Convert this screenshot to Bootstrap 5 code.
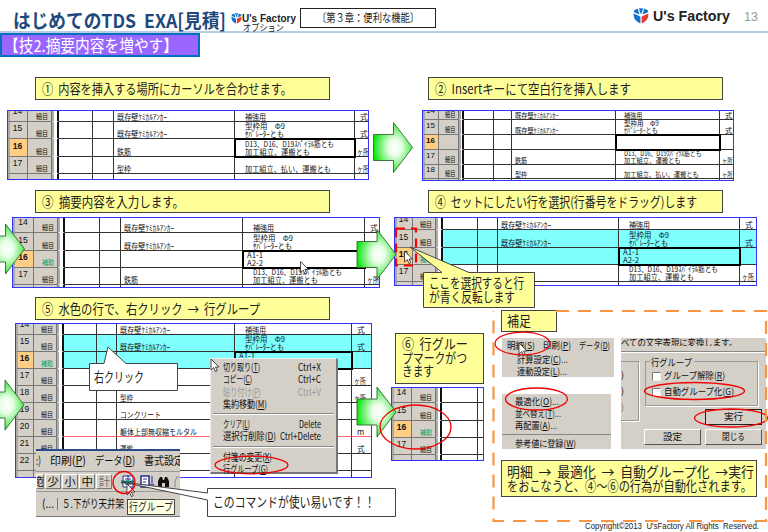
<!DOCTYPE html>
<html lang="ja">
<head>
<meta charset="utf-8">
<meta name="viewport" content="width=device-width, initial-scale=1">
<title>はじめてのTDS EXA[見積]</title>
<link href="https://cdn.jsdelivr.net/npm/bootstrap@5.3.0/dist/css/bootstrap.min.css" rel="stylesheet">
<style>
body{width:768px;height:532px;overflow:hidden;background:#fff;color:#222;font-family:"Liberation Sans","Noto Sans CJK JP",sans-serif;font-size:14px;line-height:1}
.jp{font-family:"Noto Sans CJK JP",sans-serif}
[data-w]{display:inline-block;white-space:pre;transform-origin:0 50%}
.top{height:33px;border-bottom:2px solid #b8cce4}
.top>*{flex-shrink:0}
.ttl{width:231px;padding:10px 0 0 13px;font-size:19px;font-weight:700;color:#1f497d;white-space:nowrap}
.brand-sm{width:69px;margin-top:13px;font-size:10.5px;font-weight:bold;white-space:nowrap}
.brand-sm .opt{font-size:9px;font-weight:400;padding-left:12px;line-height:8px}
.chap{width:136px;height:20px;margin:8px 0 0 0;border:1px solid #222;font-size:11.5px}
.brand-lg{margin:8px 0 0 197px;font-size:14.5px;font-weight:bold;height:16px}
.pg{margin:11px 0 0 14px;font-size:12.5px;color:#999}
.tech{width:200px;height:24px;background:#96f;border:2px solid #0070c0;color:#fff;font-size:16.5px;padding-left:2px}
.band-a{height:130px}.band-b{height:105px}.band-c{height:240px}
.note{background:#ff9;border:1px solid #444;font-size:13.5px;height:23px;width:295px;padding-left:6px;white-space:nowrap}
.s1{width:400px;padding-top:20px}.s1 .note{margin-left:35px}.s1 .fig{margin:10px 0 0 7px}
.s2{padding-top:20px}.s2 .note{margin-left:28px}.s2 .fig{margin:10px 0 0 22px}
.s3{width:390px;padding-top:3px}.s3 .note{margin-left:35px}.s3 .fig{margin:4px 0 0 12px}
.s4{padding-top:3px}.s4 .note{margin-left:38px}.s4 .fig{margin:4px 0 0 4px}
.s5{width:380px;padding-top:5px}.s5 .note{margin-left:35px}.s5 .fig{margin:3px 0 0 15px}
.s6{width:113px;padding-top:41px}.s6 .note{margin-left:15px;width:89px;height:51px;line-height:13.6px;padding-top:3px}.s6 .fig{margin:3px 0 0 11px}
.s6 .note span{line-height:13.6px}
.fig{border:1px solid #33f;overflow:hidden;isolation:isolate;background:#fff;font-family:"Noto Sans CJK JP",sans-serif}
.sheet{display:grid}
.sheet>div{position:relative;border-right:1px solid #333;border-bottom:1px solid #333;display:flex;flex-direction:column;justify-content:flex-end;font-size:7.8px;line-height:7.8px;color:#111;white-space:nowrap;min-width:0;min-height:0}
.sheet.tight>div{line-height:6.9px;font-size:7.2px}
.sheet>.num{background:#d4d0c8;border-color:#777;font-size:8.5px;font-family:"Liberation Sans",sans-serif;padding:0 2px 5px 0;text-align:center;border-left:2px solid #aaa}
.sheet.tight>.num{padding-bottom:4px;font-size:8px}
.sheet>.num.on{background:#ffce84;font-weight:bold}
.sheet>.kind{background:#d4d0c8;border-color:#777;align-items:center;font-size:7px;line-height:7px;padding-left:4px;padding-bottom:1px}
.sheet>.kind.aid{color:#00a060}
.sheet>.gap{border-bottom-color:#fff;border-right:2px solid #111;background:#fff;border-left:2px solid #aaa}
.sheet>.aqua{background:#80ffff}
.sheet>.cur{outline:2px solid #000;outline-offset:-1px;z-index:1}
.sheet>.redl{border-bottom-color:#f66}
.sheet>.last{border-right:0}
.sup{width:273px;height:211px;margin-top:18px}
.sup .lbl{width:56px;height:22px;margin-left:8px;padding-left:5px}
.win{background:#d4d0c8;font-family:"Noto Sans CJK JP",sans-serif;font-size:9.5px;white-space:nowrap;overflow:hidden;color:#111}
.m1{width:112px;height:39px;margin:6px 0 0 9px}.m1 .bar{height:15px;padding-left:5px;gap:8px}
.m1 .it,.m2 .it{height:12px;line-height:12px;padding-left:15px}
.m2{width:109px;height:55px;margin:17px 0 0 9px;padding-top:1px}.m2 .it{padding-left:13px}
.m2 .sep{border-top:1px solid #888;margin:3px 0 2px}
.dlg{width:145px;height:111px;margin-top:6px;margin-left:7px}
.dlg .cut{height:14px;border-bottom:1px solid #888;box-shadow:0 1px #fff}
.dlg .cut>div{height:8px;width:130px;overflow:hidden}
.dlg .cut span{margin-top:-4px}
.grpL{width:18px;height:60px;margin-top:9px;border:1px solid #999;border-left:0;box-shadow:1px 1px #fff;padding-top:5px;line-height:16px;font-size:9px}
.grpR{width:113px;height:45px;margin:9px 0 0 6px;border:1px solid #999;box-shadow:1px 1px #fff}
.grpR .leg{margin:-6px 0 0 4px;height:12px;line-height:12px;background:#d4d0c8;width:44px;padding-left:1px}
.chk{width:9px;height:9px;background:#fff;border:1px solid #777;border-right-color:#eee;border-bottom-color:#eee;margin-right:3px}
.grpR .ln{height:16px;padding-left:6px}
.wb{background:#d4d0c8;border:1px solid #fff;border-right-color:#555;border-bottom-color:#555;height:16px;width:57px}
.wb.dk{border-color:#222}.runrow{margin-top:-12px}
.sup .msg{width:256px;height:37px;margin:11px 0 0 8px;line-height:14px;padding:3px 0 0 5px}
.copy{font:8.6px/1 "Liberation Sans",sans-serif;padding:1px 0 0 92px;white-space:nowrap}
.over{position:absolute}
.ctx{left:210px;top:358px;width:128px;height:116px;background:#d4d0c8;border:1px solid #eee;border-right:2px solid #777;border-bottom:2px solid #777;padding:2px 15px 0 12px;font-size:9.8px;color:#111}
.ctx .it{height:12.3px;line-height:12.3px;white-space:nowrap}
.ctx .dim{color:#999}
.ctx hr{margin:3px -13px 3px -10px;border:0;border-top:1px solid #888;border-bottom:1px solid #fff;opacity:1}
.tb{left:36px;top:449px;width:144px;height:68px;border-top:2px solid #2c4b87;font-size:11.5px;border-bottom:1px solid #777}
.tb .r1{height:21px;gap:9px;border-bottom:1px solid #999}
.tb .r2{height:20px;gap:1px;border-bottom:1px solid #999}
.tb .bt{width:16.5px;height:15px;border:1px solid #fff;border-right-color:#777;border-bottom-color:#777;font-size:11.5px;line-height:12px;text-align:center}
.tb .bt.half{width:8px;text-indent:-5px;overflow:hidden}
.tb .r3{height:24px;padding-left:6px}
.tb .tab1{border-left:1px solid #777;margin-left:3px;padding-left:4px}
.tip{left:127px;top:499px;width:48px;height:16px;background:#ffffe1;border:1px solid #444;font-size:11px;line-height:13px;padding-left:1px}
.draw{left:0;top:0;pointer-events:none}
.t1{left:429px;top:275px;line-height:14px;font-size:13.5px}
.t2{left:94px;top:370px;font-size:13.5px}
.t3{left:213px;top:495px;font-size:13.5px}
</style>
<script src="https://cdn.jsdelivr.net/npm/bootstrap@5.3.0/dist/js/bootstrap.bundle.min.js"></script>
</head>
<body class="position-relative">
<svg width="0" height="0" class="over"><defs>
<symbol id="logo" viewBox="0 0 16 16"><path d="M.6 5.6 7.4 8.400V15.500Q1 13 .6 7Z" fill="#1473c8"/><path d="M8.600 15.500V8.400L15.400 5.600V7Q15 13 8.600 15.500Z" fill="#e8382f"/><path d="M1 4.200 1.200 2.200 4.600.6 6.600 6.500Z" fill="#1473c8"/><path d="M5.800.4Q8 0 10.200.4L8 6.400Z" fill="#1473c8"/><path d="M11.400.6 14.800 2.200 15 4.200 9.400 6.500Z" fill="#1473c8"/></symbol>
</defs></svg>

<header class="top d-flex align-items-start">
  <div class="ttl jp"><span data-w="213">はじめてのTDS  EXA[見積]</span></div>
  <div class="brand-sm"><div class="d-flex"><svg width="11" height="11" class="me-px"><use href="#logo"/></svg><span data-w="54">U's Factory</span></div><div class="opt jp"><span data-w="41">オプション</span></div></div>
  <div class="chap jp d-flex align-items-center justify-content-center"><span data-w="102">〔第３章：便利な機能〕</span></div>
  <div class="brand-lg d-flex align-items-center"><svg width="16" height="16" class="me-1"><use href="#logo"/></svg><span data-w="77">U's Factory</span></div>
  <div class="pg">13</div>
</header>
<div class="tech jp d-flex align-items-center"><span data-w="174">【技2.摘要内容を増やす】</span></div>

<main class="jp">
  <div class="band-a d-flex">
    <section class="s1"><div class="note d-flex align-items-center"><span data-w="250">①  内容を挿入する場所にカーソルを合わせます。</span></div><div class="fig" data-sheet="a"></div></section>
    <section class="s2"><div class="note d-flex align-items-center"><span data-w="196">②  Insertキーにて空白行を挿入します</span></div><div class="fig" data-sheet="b"></div></section>
  </div>
  <div class="band-b d-flex">
    <section class="s3"><div class="note d-flex align-items-center"><span data-w="142">③  摘要内容を入力します。</span></div><div class="fig" data-sheet="c"></div></section>
    <section class="s4"><div class="note d-flex align-items-center"><span data-w="262">④  セットにしたい行を選択(行番号をドラッグ)します</span></div><div class="fig" data-sheet="d"></div></section>
  </div>
  <div class="band-c d-flex">
    <section class="s5"><div class="note d-flex align-items-center"><span data-w="218">⑤  水色の行で、右クリック  →  行グループ</span></div><div class="fig" data-sheet="e"></div></section>
    <section class="s6"><div class="note"><span data-w="66">⑥  行グルー</span><br><span data-w="65">プマークがつ</span><br><span data-w="32">きます</span></div><div class="fig" data-sheet="f"></div></section>
    <section>
      <div class="sup">
        <div class="note lbl d-flex align-items-center"><span data-w="24">補足</span></div>
        <div class="d-flex">
          <div>
            <div class="win m1"><div class="bar d-flex align-items-center"><span data-w="28">明細(<u>S</u>)</span><span data-w="28">印刷(<u>P</u>)</span><span data-w="31">データ(<u>D</u>)</span></div><div class="it"><span data-w="51">計算設定(<u>C</u>)...</span></div><div class="it"><span data-w="50">連動設定(<u>L</u>)...</span></div></div>
            <div class="win m2"><div class="it"><span data-w="44">最適化(<u>O</u>)...</span></div><div class="it"><span data-w="46">並べ替え(<u>T</u>)...</span></div><div class="it"><span data-w="42">再配置(<u>A</u>)...</span></div><div class="sep"></div><div class="it"><span data-w="61">参考値に登録(<u>W</u>)</span></div></div>
          </div>
          <div class="win dlg">
            <div class="cut"><div><span data-w="116">べての文字表現に変換します。</span></div></div>
            <div class="d-flex"><div class="grpL">)<br>)<br><span class="text-black-50">)</span></div>
              <div class="grpR"><div class="leg"><span data-w="41">行グループ</span></div><div class="ln d-flex align-items-center"><i class="chk"></i><span data-w="61">グループ解除(<u>R</u>)</span></div><div class="ln d-flex align-items-center"><i class="chk"></i><span data-w="70">自動グループ化(<u>G</u>)</span></div></div>
            </div>
            <div class="runrow d-flex justify-content-end pe-1"><div class="wb dk d-flex align-items-center justify-content-center">実行</div></div>
            <div class="d-flex justify-content-end pe-1 gap-1 pt-1"><div class="wb d-flex align-items-center justify-content-center">設定</div><div class="wb d-flex align-items-center justify-content-center"><span data-w="23">閉じる</span></div></div>
          </div>
        </div>
        <div class="note msg"><span data-w="247">明細  →  最適化  →  自動グループ化  →実行</span><br><span data-w="245">をおこなうと、④～⑥の行為が自動化されます。</span></div>
      </div>
      <footer class="copy"><span data-w="174">Copyright©2013  U'sFactory All Rights  Reserved.</span></footer>
    </section>
  </div>
</main>

<div class="over ctx jp">
  <div class="it d-flex justify-content-between"><span data-w="37">切り取り(<u>T</u>)</span><span data-w="23">Ctrl+X</span></div>
  <div class="it d-flex justify-content-between"><span data-w="29">コピー(<u>C</u>)</span><span data-w="23">Ctrl+C</span></div>
  <div class="it dim d-flex justify-content-between"><span data-w="38">貼り付け(<u>P</u>)</span><span data-w="23">Ctrl+V</span></div>
  <div class="it"><span data-w="44">集約移動(<u>M</u>)</span></div>
  <hr>
  <div class="it d-flex justify-content-between"><span data-w="27">クリア(<u>L</u>)</span><span data-w="22">Delete</span></div>
  <div class="it d-flex justify-content-between"><span data-w="53">選択行削除(<u>D</u>)</span><span data-w="41">Ctrl+Delete</span></div>
  <hr>
  <div class="it"><span data-w="49">付箋の変更(<u>X</u>)</span></div>
  <div class="it"><span data-w="45">行グループ(<u>G</u>)</span></div>
</div>

<div class="over win tb">
  <div class="r1 d-flex align-items-center"><span data-w="5">:)</span><span data-w="36">印刷(<u>P</u>)</span><span data-w="40">データ(<u>D</u>)</span><span data-w="40">書式設定</span></div>
  <div class="r2 d-flex align-items-center"><span class="bt half">範</span><span class="bt">少</span><span class="bt">小</span><span class="bt">中</span><span class="bt text-black-50">計</span>
    <svg width="64" height="18" class="ms-1"><path d="M6 3h10v11H6z" fill="#fff" stroke="#2a2a90"/><path d="M8 6h6M8 11h6M11 2v13" stroke="#2a2a90"/><path d="M4 9h13" stroke="#067a78" stroke-width="3"/><path d="M24 3h8v11h-8z" fill="#fff" stroke="#2a2a90" stroke-width="1.5"/><path d="M26 6h4M26 9h3M26 12h4M35 3v11M33 11l2 3 2-3" stroke="#2a2a90" fill="none"/><path d="M41 14V8l2-4h2l1 3h1l1-3h2l2 4v6h-4v-4h-3v4Z" fill="#111"/><path d="M58 14V8l2-4h2" stroke="#888" fill="none"/></svg></div>
  <div class="r3 d-flex align-items-center"><span data-w="12">(...</span><span class="tab1"><span data-w="62">５.下がり天井架</span></span></div>
</div>
<div class="over tip jp"><span data-w="44">行グループ</span></div>

<svg class="over draw" width="768" height="532">
  <defs>
    <radialGradient id="gr" cx=".55" cy=".5" r=".56"><stop offset="0" stop-color="#fff"/><stop offset=".3" stop-color="#e8fde8"/><stop offset="1" stop-color="#0ae60a"/></radialGradient>
    <path id="arw" d="M.5 12.5H20.5V.5L39.5 25.5 20.5 50.5V38.5H.5Z" fill="url(#gr)" stroke="#363" stroke-width=".9"/>
    <path id="ptr" d="M0 0V11L2.7 8.6 4.5 12.6 6.2 11.8 4.5 8H8Z" fill="#fff" stroke="#222" stroke-width=".8"/>
  </defs>
  <use href="#arw" x="373" y="122"/><use href="#arw" x="-15" y="223.500"/><use href="#arw" x="356.500" y="229"/><use href="#arw" x="-15.500" y="379.500"/><use href="#arw" x="356.500" y="386.500"/>
  <rect x="396" y="228.500" width="20" height="37" fill="none" stroke="#f00" stroke-width="2.200" stroke-dasharray="9 6"/>
  <use href="#ptr" x="404.500" y="251"/><use href="#ptr" x="300.500" y="261.500"/><use href="#ptr" x="211" y="359"/><use href="#ptr" x="519" y="343"/><use href="#ptr" x="127" y="484"/>
  <path d="M423.500 272.500H442L410 247 469 272.500H534.500V307.500H423.500Z" fill="#ff9" stroke="#444"/>
  <path d="M89.500 363.500H104L108 347 126 363.500H177.500V390.500H89.500Z" fill="#fff" stroke="#444"/>
  <path d="M207.500 488.500H395.500V516.500H207.500V500L122 482 207.500 493Z" fill="#fff" stroke="#444"/>
  <g fill="none" stroke="#f00000" stroke-width="1.300"><ellipse cx="251.500" cy="465" rx="36.500" ry="8.800"/><circle cx="124" cy="482.500" r="11"/><ellipse cx="415.500" cy="427" rx="35.500" ry="22"/><ellipse cx="522.500" cy="343.500" rx="27.500" ry="11.300"/><ellipse cx="536.500" cy="399" rx="31" ry="11"/><ellipse cx="694.500" cy="391" rx="50" ry="8.500"/><ellipse cx="731" cy="418" rx="36.500" ry="9"/></g>
  <path d="M556 311H766V521H493.500V311" fill="none" stroke="#f79646" stroke-width="2.200" stroke-dasharray="13 9"/>
</svg>
<div class="over t1 jp"><span data-w="95">ここを選択すると行</span><br><span data-w="86">が青く反転します</span></div>
<div class="over t2 jp"><span data-w="50">右クリック</span></div>
<div class="over t3 jp"><span data-w="162">このコマンドが使い易いです！！</span></div>

<script>
// Cell text is written as "text|width"; several lines are separated by "/".
const ANC = '既存壁ｹﾐｶﾙｱﾝｶｰ|50', SEP = '型枠用　Φ9|40/ｾﾊﾟﾚｰﾀｰとも|39',
      BAR = 'D13、D16、D19ｽﾊﾟｲﾗﾙ筋とも|89/加工組立、運搬とも|65', CAR = '加工組立、払い、運搬とも|86';
const sheets = {
  a: {w:362,h:70,x:[20,24,7,34,21,121,120,14],y:[11,17,18,17,8],pad:10,
    rows:[['14','細目',ANC,'補強用|21','式'],['15','細目',ANC,SEP,'式'],['16','細目','鉄筋|14',BAR,'ヶ所','on cur'],['17','細目','型枠|14',CAR,'ヶ所'],['','','','','']]},
  b: {w:312,h:71,x:[16,20,5,30,18,104,104,14],y:[9,15,15,15,14,3],pad:8,k:.87,
    rows:[['14','細目',ANC,'補強用|21','式'],['15','細目',ANC,SEP,'式'],['16','','','','','on cur'],['17','細目','鉄筋|14',BAR,'ヶ所'],['18','細目','型枠|14',CAR,'ヶ所'],['','','','','']]},
  c: {w:368,h:71,x:[21,24,7,35,21,122,122,15],y:[15,18,17,17,4],pad:10,
    rows:[['14','細目',ANC,'補強用|21','式'],['15','細目',ANC,SEP,'式'],['16','補助','','A1-1|16/A2-2|16','','on cur in'],['17','細目','鉄筋|14',BAR,'ヶ所'],['','','','','']]},
  d: {w:363,h:69,x:[18,23,7,35,20,121,121,17],y:[12,18,17,17,4],pad:10,
    rows:[['14','細目',ANC,'補強用|21','式'],['15','細目',ANC,SEP,'式','aqua'],['16','補助','','A1-1|16/A2-2|16','','on cur in aqua'],['17','細目','',BAR,'ヶ所'],['','','','','']]},
  e: {w:357,h:155,x:[18,23,7,33,20,118,117,20],y:[11,17,17,17,17,17,17,17,17,7],pad:10,
    rows:[['14','細目',ANC,'補強用|21','式'],['15','細目',ANC,SEP,'式','aqua'],['16','補助','','A1-1|16/&nbsp;','','on cur in aqua'],['17','細目','','','ヶ所'],['18','細目','型枠|13','','ヶ所'],['19','細目','コンクリート|41','','㎡'],['20','細目','躯体上部無収縮モルタル|77','','m','redl'],['21','細目','運搬|13','','式'],['22','','','',''],['','','','','']]},
  f: {w:93,h:74,x:[20,24,6,36,20],y:[15,18,17,17,7],pad:10,
    rows:[['14','細目'],['15','細目'],['16','補助','','','','on'],['17','細目'],['','']]}
};
function lines(s, k) {
  return (s || '').split('/').map(t => { const p = t.split('|'); return p[1] ? `<div><span data-w="${p[1] * k}">${p[0]}</span></div>` : `<div>${p[0]}</div>`; }).join('');
}
document.querySelectorAll('[data-sheet]').forEach(f => {
  const s = sheets[f.dataset.sheet], k = s.k || 1;
  f.style.width = s.w + 'px'; f.style.height = s.h + 'px';
  const g = document.createElement('div'); g.className = 'sheet' + (k < 1 ? ' tight' : '');
  g.style.gridTemplateColumns = s.x.map(v => v + 'px').join(' ');
  g.style.gridTemplateRows = s.y.map(v => v + 'px').join(' ');
  s.rows.forEach(r => {
    const o = r[5] || '', aq = o.includes('aqua') ? ' aqua' : '', red = o.includes('redl') ? ' redl' : '';
    const add = (c, h, pad) => { const d = document.createElement('div'); d.className = c; d.innerHTML = h; if (pad) d.style.paddingLeft = pad + 'px'; g.append(d); };
    add('num' + (o.includes('on') ? ' on' : ''), r[0]);
    add('kind' + (r[1] === '補助' ? ' aid' : ''), r[1] && `<span data-w="${12 * k}">${r[1]}</span>`);
    add('gap', '');
    add(aq + red, ''); add(aq + red, '');
    if (s.x.length > 5) {
      add(aq + red, lines(r[2], k), 3);
      add(aq + red + (o.includes('cur') ? ' cur' : ''), lines(r[3], k), o.includes(' in') ? 4 : s.pad);
      add('last' + aq + red, r[4] === 'ヶ所' ? lines('ヶ所|12', k) : lines(r[4], k), r[4] === 'ヶ所' ? 2 : 5);
    }
  });
  f.append(g);
});
// Fit each label to its nominal width: condense wide ones, space out narrow ones.
document.querySelectorAll('[data-w]').forEach(e => {
  const w = +e.dataset.w, m = e.getBoundingClientRect().width;
  if (m > w) e.style.transform = `scaleX(${w / m})`;
  else e.style.letterSpacing = (w - m) / e.textContent.length + 'px';
  if (m > w) e.style.marginRight = (w - m) + 'px';
});
</script>
</body>
</html>
